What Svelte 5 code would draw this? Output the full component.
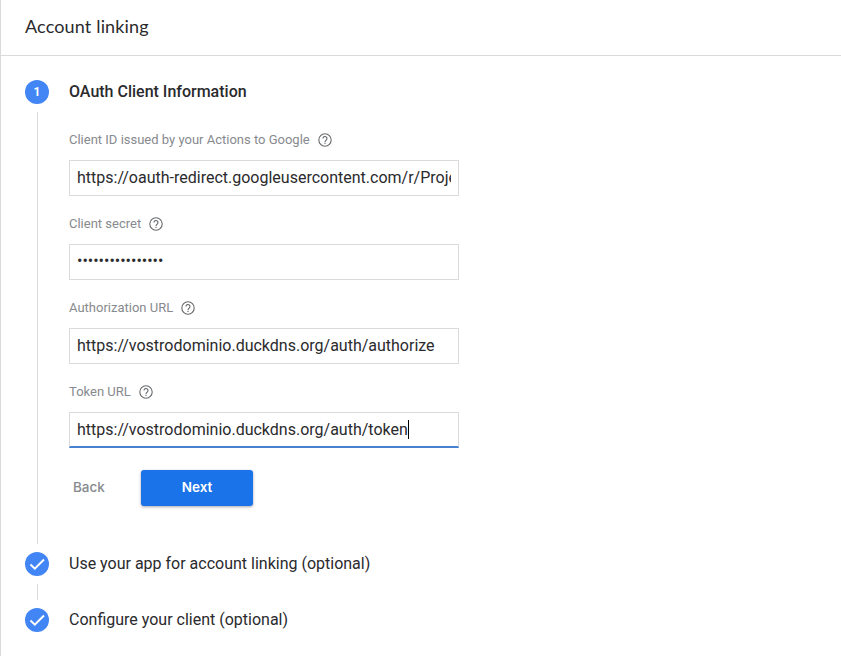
<script lang="ts">
  interface Field {
    label: string;
    value: string;
    secret?: boolean;
    focused?: boolean;
  }

  const fields: Field[] = [
    { label: 'Client ID issued by your Actions to Google', value: 'https://oauth-redirect.googleusercontent.com/r/Project' },
    { label: 'Client secret', value: '•'.repeat(16), secret: true },
    { label: 'Authorization URL', value: 'https://vostrodominio.duckdns.org/auth/authorize' },
    { label: 'Token URL', value: 'https://vostrodominio.duckdns.org/auth/token', focused: true },
  ];

  const doneSteps = ['Use your app for account linking (optional)', 'Configure your client (optional)'];
</script>

<main class="panel">
  <header><h1>Account linking</h1></header>

  <div class="stepper">
    <section class="step first">
      <div class="rail">
        <span class="badge">1</span>
        <span class="line"></span>
      </div>
      <div class="content">
        <h2 class="title active">OAuth Client Information</h2>
        {#each fields as field}
          <div class="field">
            <div class="label">
              <span class="label-text">{field.label}</span>
              <svg viewBox="0 0 16 16" width="16" height="16">
                <circle cx="8" cy="8" r="6.200" />
                <path d="M6 6.500a2 2 0 1 1 3.300 1.500C8.500 8.600 8 8.900 8 9.900M8 10.800v1.200" />
              </svg>
            </div>
            <div class="input" class:secret={field.secret} class:focused={field.focused}>
              <div class="value">{field.value}</div>
              {#if field.focused}<span class="caret"></span>{/if}
            </div>
          </div>
        {/each}
        <div class="actions">
          <button class="back">Back</button>
          <button class="next">Next</button>
        </div>
      </div>
    </section>

    {#each doneSteps as title, i}
      <section class="step">
        <div class="rail">
          <span class="badge">
            <svg viewBox="0 0 24 24" width="24" height="24">
              <path d="M5.500 12.500L9.800 16.700L19 7.500" fill="none" stroke="#fff" stroke-width="2" />
            </svg>
          </span>
          {#if i < doneSteps.length - 1}<span class="line"></span>{/if}
        </div>
        <h2 class="title">{title}</h2>
      </section>
    {/each}
  </div>
</main>

<style>
  :global(body) { background: #fff; }

  .panel {
    box-sizing: border-box;
    height: 656px;
    overflow: hidden;
    border-left: 1px solid #dadada;
    font-family: Roboto, sans-serif;
    color: #2a2a2d;
  }

  header {
    box-sizing: border-box;
    height: 56px;
    padding-left: 24px;
    border-bottom: 1px solid #dadada;
  }

  h1 {
    margin: 0;
    font: 400 18px/53px Lato, sans-serif;
    letter-spacing: 0.15px;
  }

  .stepper { padding: 24px 0 0 24px; }

  .step {
    display: flex;
    gap: 20px;
    min-height: 56px;
  }

  .step.first { height: 472px; }

  .rail {
    display: flex;
    flex-direction: column;
    align-items: center;
    gap: 8px;
    width: 24px;
    padding-bottom: 8px;
  }

  .badge {
    display: flex;
    align-items: center;
    justify-content: center;
    flex: none;
    width: 24px;
    height: 24px;
    border-radius: 50%;
    background: #4285f4;
    color: #fff;
    font-size: 12px;
    font-weight: 700;
  }

  .line {
    flex: 1;
    width: 1px;
    margin-left: 1px;
    background: #dadada;
  }

  .title {
    margin: 0;
    font-size: 16px;
    font-weight: 400;
    line-height: 24px;
  }

  .title.active { font-weight: 500; }

  .content { width: 390px; }

  .field { padding-top: 24px; }

  .field + .field { padding-top: 16px; }

  .label {
    display: flex;
    align-items: center;
    gap: 7px;
    height: 24px;
    margin-bottom: 8px;
    font-size: 13px;
    color: #878a8e;
  }

  .label-text { padding-bottom: 2px; }

  .label svg {
    fill: none;
    stroke: #66696c;
    stroke-width: 1.1;
  }

  .input {
    box-sizing: border-box;
    display: flex;
    align-items: center;
    height: 36px;
    padding: 0 7px;
    border: 1px solid #dadada;
    font-size: 16px;
    line-height: 34px;
  }

  .input.secret { padding-bottom: 2px; }

  .input.focused { border-bottom: 2px solid #4a80d0; }

  .value {
    overflow: hidden;
    white-space: nowrap;
  }

  .caret {
    width: 1px;
    height: 19px;
    background: #000;
  }

  .actions {
    display: flex;
    gap: 32px;
    padding: 22px 0 0 4px;
  }

  button {
    height: 36px;
    padding: 0 0 2px;
    border: 0;
    font: 500 13.5px Inter, sans-serif;
  }

  .back {
    width: 36px;
    background: none;
    color: #878a8e;
    text-align: left;
  }

  .next {
    width: 112px;
    border-radius: 3px;
    background: #1a73e8;
    color: #fff;
    font-weight: 600;
    box-shadow: 0 1px 3px rgba(0, 0, 0, 0.35);
  }
</style>
